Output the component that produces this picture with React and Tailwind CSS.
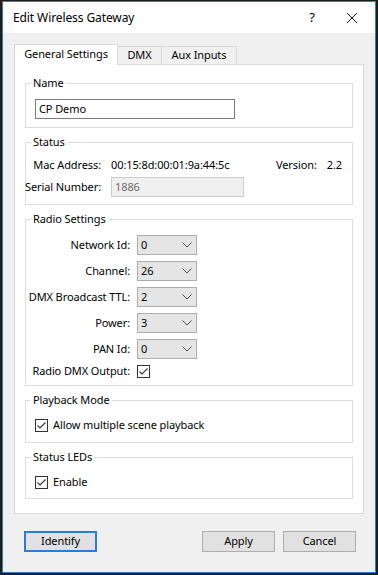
import React from "react";

function Chevron() {
  return (
    <svg width="10" height="6" viewBox="0 0 10 6" className="shrink-0">
      <path d="M0.5 0.5 L5 5 L9.5 0.5" fill="none" stroke="#505050" strokeWidth="1" />
    </svg>
  );
}

function Check() {
  return (
    <span className="w-[13px] h-[13px] border border-[#333333] bg-white flex items-center justify-center shrink-0">
      <svg width="11" height="11" viewBox="0 0 11 11">
        <path d="M1.5 5.5 L4 8 L9.5 2.5" fill="none" stroke="#333333" strokeWidth="1.1" />
      </svg>
    </span>
  );
}

function Select({ value }) {
  return (
    <div className="w-[60px] h-[20px] border border-[#adadad] bg-[#e5e5e5] flex items-center justify-between pl-[3px] pr-[4px]">
      <span>{value}</span>
      <Chevron />
    </div>
  );
}

function Group({ title, children, className = "" }) {
  return (
    <fieldset className={"border border-[#dcdcdc] px-[9px] min-w-0 " + className}>
      <legend className="-ml-[4px] px-[2px] leading-[16px]">{title}</legend>
      {children}
    </fieldset>
  );
}

function Label({ w, children }) {
  return (
    <div className={"flex justify-end whitespace-nowrap -ml-[6px] shrink-0 " + w}>
      <span>{children}</span>
    </div>
  );
}

function RadioRow({ label, children }) {
  return (
    <div className="flex items-center h-[20px]">
      <Label w="w-[101px]">{label}</Label>
      <div className="ml-[7px]">{children}</div>
    </div>
  );
}

export default function App() {
  return (
    <div
      className="w-[378px] h-[575px] bg-[#1d1d1d] pt-[1px] px-[2px] pb-[2px] text-[11px] tracking-[-0.1px] text-black"
      style={{ fontFamily: '"Segoe UI", "Noto Sans", "Open Sans", sans-serif' }}
    >
      <div className="h-full border border-[#2b7cd6] flex flex-col">
        {/* title bar */}
        <div className="h-[31px] bg-white flex items-center pl-[10px] shrink-0">
          <span className="text-[12px] flex-1">Edit Wireless Gateway</span>
          <span className="w-[20px] text-center text-[13px] mr-[24px]">?</span>
          <svg width="12" height="12" viewBox="0 0 12 12" className="mr-[17px]">
            <path d="M1 1 L11 11 M11 1 L1 11" stroke="#111" strokeWidth="1" />
          </svg>
        </div>

        {/* content */}
        <div className="flex-1 bg-[#f0f0f0] px-[11px] pt-[11px] flex flex-col">
          {/* tabs */}
          <div className="flex items-end h-[20px]">
            <div className="w-[104px] h-[21px] -mb-[1px] bg-white border border-b-0 border-[#d9d9d9] relative z-10 flex items-center justify-center pb-[2px]">
              General Settings
            </div>
            <div className="w-[44px] h-[18px] border border-b-0 border-l-0 border-[#d9d9d9] bg-[#f0f0f0] flex items-center justify-center">
              DMX
            </div>
            <div className="w-[75px] h-[18px] border border-b-0 border-l-0 border-[#d9d9d9] bg-[#f0f0f0] flex items-center justify-center">
              Aux Inputs
            </div>
          </div>

          {/* panel */}
          <div className="h-[450px] bg-white border border-[#d9d9d9] px-[10px] pt-[10px] flex flex-col gap-[6px]">
            <Group title="Name" className="pb-[8px]">
              <div className="pt-[8px]">
                <div className="w-[200px] h-[20px] border border-[#7a7a7a] bg-white flex items-center pl-[3px]">
                  CP Demo
                </div>
              </div>
            </Group>

            <Group title="Status" className="pb-[7px]">
              <div className="pt-[7px] flex items-center h-[23px] leading-[16px]">
                <Label w="w-[72px]">Mac Address:</Label>
                <div className="ml-[10px] flex-1">00:15:8d:00:01:9a:44:5c</div>
                <div>Version:</div>
                <div className="ml-[10px] mr-[1px]">2.2</div>
              </div>
              <div className="mt-[4px] flex items-center">
                <Label w="w-[72px]">Serial Number:</Label>
                <div className="ml-[10px] w-[133px] h-[20px] border border-[#cccccc] bg-[#f0f0f0] text-[#6d6d6d] flex items-center pl-[3px]">
                  1886
                </div>
              </div>
            </Group>

            <Group title="Radio Settings" className="pb-[7px]">
              <div className="pt-[8px] flex flex-col gap-[6px]">
                <RadioRow label="Network Id:"><Select value="0" /></RadioRow>
                <RadioRow label="Channel:"><Select value="26" /></RadioRow>
                <RadioRow label="DMX Broadcast TTL:"><Select value="2" /></RadioRow>
                <RadioRow label="Power:"><Select value="3" /></RadioRow>
                <RadioRow label="PAN Id:"><Select value="0" /></RadioRow>
                <div className="flex items-center h-[13px]">
                  <Label w="w-[101px]">Radio DMX Output:</Label>
                  <div className="ml-[7px]"><Check /></div>
                </div>
              </div>
            </Group>

            <Group title="Playback Mode" className="pb-[9px]">
              <div className="pt-[9px] flex items-center h-[25px] gap-[5px]">
                <Check />
                <span>Allow multiple scene playback</span>
              </div>
            </Group>

            <Group title="Status LEDs" className="pb-[8px]">
              <div className="pt-[9px] flex items-center h-[25px] gap-[5px]">
                <Check />
                <span>Enable</span>
              </div>
            </Group>
          </div>

          {/* buttons */}
          <div className="mt-[17px] flex items-center pl-[10px] pr-[8px]">
            <button className="w-[73px] h-[21px] border-2 border-[#2b7cd6] bg-[#e1e1e1] flex items-center justify-center">
              Identify
            </button>
            <div className="flex-1" />
            <button className="w-[73px] h-[21px] border border-[#adadad] bg-[#e1e1e1] flex items-center justify-center">
              Apply
            </button>
            <button className="ml-[8px] w-[73px] h-[21px] border border-[#adadad] bg-[#e1e1e1] flex items-center justify-center">
              Cancel
            </button>
          </div>
        </div>
      </div>
    </div>
  );
}
